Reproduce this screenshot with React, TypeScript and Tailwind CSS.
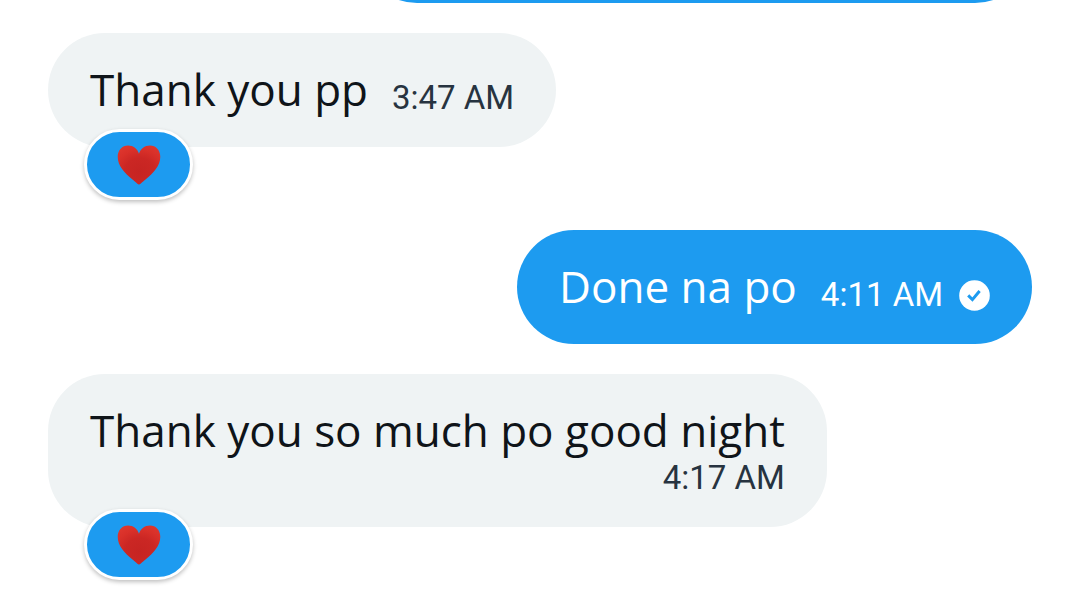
import React from 'react';
import clsx from 'clsx';

interface Message {
  id: number;
  text: string;
  time: string;
  sent?: boolean;
  liked?: boolean;
  stacked?: boolean;
}

const messages: Message[] = [
  { id: 1, text: 'Thank you pp', time: '3:47 AM', liked: true },
  { id: 2, text: 'Done na po', time: '4:11 AM', sent: true },
  { id: 3, text: 'Thank you so much po good night', time: '4:17 AM', liked: true, stacked: true },
];

function HeartIcon() {
  return (
    <svg viewBox="0 0 44 40" className="h-10 w-11" aria-hidden="true">
      <defs>
        <radialGradient id="heart-fill" cx="0.52" cy="0.68" r="0.72">
          <stop offset="0" stopColor="#c62422" />
          <stop offset="0.5" stopColor="#cb2724" />
          <stop offset="0.8" stopColor="#d93029" />
          <stop offset="1" stopColor="#dd352d" />
        </radialGradient>
      </defs>
      <path
        d="M22 39.5C20.8 39.5 19 37.3 15.5 34.5C7.5 28.2 0.7 20.8 0.7 11.8C0.7 5.2 5.2 0.6 11 0.6C16.4 0.6 20.4 3.8 22 8.8C23.6 3.8 27.6 0.6 33 0.6C38.8 0.6 43.3 5.2 43.3 11.8C43.3 20.8 36.5 28.2 28.5 34.5C25 37.3 23.2 39.5 22 39.5Z"
        fill="url(#heart-fill)"
      />
    </svg>
  );
}

function ReadIcon() {
  return (
    <svg viewBox="0 0 31 31" className="h-[31px] w-[31px]" role="img" aria-label="Sent">
      <circle cx="15.5" cy="15.5" r="15.3" fill="#fff" />
      <path d="M9.2 15.4L13.4 19.6L20.6 11" fill="none" stroke="#1d9bf0" strokeWidth="3" />
    </svg>
  );
}

function Reaction() {
  return (
    <button
      type="button"
      aria-label="Heart reaction"
      className="-mt-[18px] ml-9 flex h-[71px] w-[109px] items-center justify-center rounded-full border-3 border-white bg-[#1d9bf0] shadow-[0_2px_4px_rgba(0,0,0,0.25)]"
    >
      <HeartIcon />
    </button>
  );
}

function MessageBubble({ text, time, sent, liked, stacked }: Message) {
  return (
    <li className={clsx('flex flex-col', sent ? 'items-end' : 'items-start')}>
      <div
        className={clsx(
          'flex rounded-[57px] px-[42px] pt-[28px] pb-[30px]',
          stacked ? 'flex-col gap-px' : 'items-end gap-6',
          sent ? 'bg-[#1d9bf0] text-white' : 'bg-[#eff3f4] text-[#0f1419]',
        )}
      >
        <p className="font-['Open_Sans',sans-serif] text-[44px] leading-[56px]">{text}</p>
        <div
          className={clsx(
            "flex items-center justify-end gap-4 font-['Roboto',sans-serif] text-[33px] leading-[38px] whitespace-nowrap",
            !sent && 'text-[#273340]',
          )}
        >
          <time>{time}</time>
          {sent && <ReadIcon />}
        </div>
      </div>
      {liked && <Reaction />}
    </li>
  );
}

export default function App() {
  return (
    <main className="min-h-screen overflow-hidden bg-white pr-11 pl-12">
      {/* bottom edge of the message scrolled off above */}
      <div className="flex h-[3px] items-end justify-end overflow-hidden">
        <div className="h-[114px] w-[672px] max-w-full rounded-[57px] bg-[#1d9bf0]" />
      </div>
      <ul className="flex flex-col gap-[30px] pt-[30px]">
        {messages.map((message) => (
          <MessageBubble key={message.id} {...message} />
        ))}
      </ul>
    </main>
  );
}
